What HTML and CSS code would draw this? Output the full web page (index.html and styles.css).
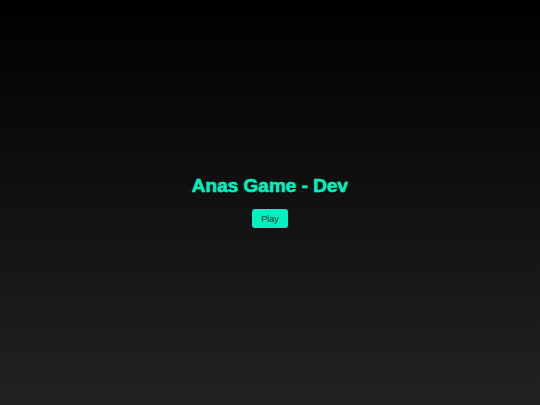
FILE: index.html
```html
<!DOCTYPE html>
<html>
<head>
<meta charset="utf-8">
<link rel="stylesheet" href="styles.css">
</head>
<body>
<main class="screen">
  <h1 class="title">Anas Game - Dev</h1>
  <button class="play">Play</button>
</main>
</body>
</html>
```
FILE: styles.css
```css
html, body {
  margin: 0;
  padding: 0;
  height: 100%;
}
body {
  background: linear-gradient(to bottom, #000000 0%, #222222 100%);
  font-family: "Liberation Sans", Arial, sans-serif;
}
.screen {
  box-sizing: border-box;
  height: 100%;
  padding-bottom: 2px;
  display: flex;
  flex-direction: column;
  align-items: center;
  justify-content: center;
}
.title {
  margin: 0 0 12px;
  font-size: 19px;
  line-height: 22px;
  font-weight: 700;
  color: #00f0c0;
  -webkit-text-stroke: 0.6px #00f0c0;
}
.play {
  width: 36px;
  height: 19px;
  padding: 0;
  border: none;
  border-radius: 3px;
  background: #00f0c0;
  color: #0b2f28;
  font-family: "Liberation Sans", Arial, sans-serif;
  font-size: 9px;
  cursor: pointer;
}
```
